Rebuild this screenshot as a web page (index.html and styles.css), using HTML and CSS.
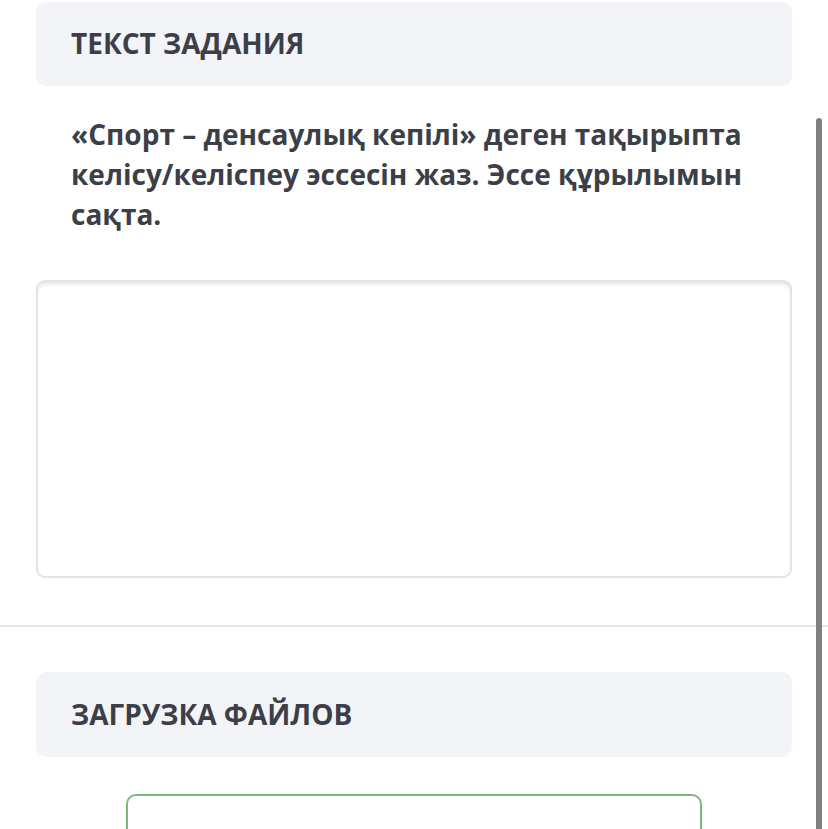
FILE: index.html
```html
<!DOCTYPE html>
<html lang="kk">
<head>
<meta charset="utf-8">
<title>Задание</title>
<link rel="stylesheet" href="styles.css">
</head>
<body>
<div class="page">
  <section class="task">
    <div class="panel-head"><h2 class="panel-title">ТЕКСТ ЗАДАНИЯ</h2></div>
    <p class="question">«Спорт – денсаулық кепілі» деген тақырыпта келісу/келіспеу эссесін жаз. Эссе құрылымын сақта.</p>
    <div class="answer" contenteditable="true"></div>
  </section>
  <hr class="divider">
  <section class="upload">
    <div class="panel-head panel-head-tall"><h2 class="panel-title">ЗАГРУЗКА ФАЙЛОВ</h2></div>
    <div class="dropzone"><span class="drop-text">Перетащите файлы сюда</span></div>
  </section>
</div>
<div class="scrollbar"></div>
</body>
</html>
```
FILE: styles.css
```css
html, body {
  margin: 0;
  padding: 0;
  background: #ffffff;
  overflow: hidden;
}
body {
  font-family: "Open Sans", "Noto Sans", sans-serif;
  color: #3c3f47;
  width: 828px;
  height: 829px;
  position: relative;
}
.page {
  display: flex;
  flex-direction: column;
}
.task {
  padding: 2px 36px 0 36px;
  display: flex;
  flex-direction: column;
}
.panel-head {
  background: #f3f4f7;
  border-radius: 10px;
  height: 84px;
  display: flex;
  align-items: center;
  padding: 0 35px;
}
.panel-head-tall {
  height: 85px;
}
.panel-title {
  margin: 0;
  font-size: 28px;
  font-weight: 700;
  color: #3c3f47;
  line-height: 1;
  position: relative;
  top: -1px;
}
.question {
  margin: 0;
  padding: 28px 35px 0 35px;
  font-size: 28px;
  font-weight: 700;
  line-height: 40px;
  color: #3c3f47;
}
.answer {
  margin-top: 46px;
  height: 294px;
  border: 2px solid #e3e3e3;
  border-radius: 9px;
  box-shadow: inset 0 4px 4px -2px rgba(0,0,0,0.12);
}
.divider {
  margin: 47px 0 0 0;
  border: 0;
  height: 2px;
  background: #e6e6e6;
}
.upload {
  padding: 45px 36px 0 36px;
  display: flex;
  flex-direction: column;
}
.dropzone {
  margin: 37px 90px 0 90px;
  height: 120px;
  border: 2px solid #7dba79;
  border-radius: 10px;
  display: flex;
  justify-content: center;
  padding-top: 30px;
  box-sizing: border-box;
}
.drop-text {
  font-size: 22px;
  color: #c4c4c4;
}
.scrollbar {
  position: absolute;
  left: 816px;
  top: 118px;
  width: 6px;
  height: 720px;
  background: #808080;
  border-radius: 3px 3px 0 0;
}
```
